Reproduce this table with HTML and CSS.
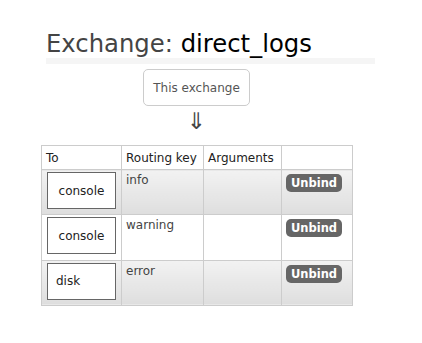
FILE: index.html
```html
<!DOCTYPE html>
<html>
<head>
<meta charset="utf-8">
<link rel="stylesheet" href="styles.css">
</head>
<body>
<div class="page">
  <h1 class="title"><span class="label">Exchange:</span> <span class="name">direct_logs</span></h1>
  <div class="band"></div>
  <div class="flow">
    <div class="source">This exchange</div>
    <div class="arrow">&#8659;</div>
  </div>
  <table class="bindings">
    <colgroup>
      <col class="c1"><col class="c2"><col class="c3"><col class="c4">
    </colgroup>
    <thead>
      <tr><th>To</th><th>Routing key</th><th>Arguments</th><th></th></tr>
    </thead>
    <tbody>
      <tr class="alt">
        <td><div class="dest">console</div></td>
        <td>info</td>
        <td></td>
        <td><button class="unbind">Unbind</button></td>
      </tr>
      <tr>
        <td><div class="dest">console</div></td>
        <td>warning</td>
        <td></td>
        <td><button class="unbind">Unbind</button></td>
      </tr>
      <tr class="alt">
        <td><div class="dest dest-left">disk</div></td>
        <td>error</td>
        <td></td>
        <td><button class="unbind">Unbind</button></td>
      </tr>
    </tbody>
  </table>
</div>
</body>
</html>
```
FILE: styles.css
```css
html, body {
  margin: 0;
  padding: 0;
  background: #fff;
}
body {
  font-family: "DejaVu Sans", Verdana, sans-serif;
  font-size: 12px;
  color: #444;
}
.page {
  padding: 29px 0 0 41px;
}
.title {
  margin: 0 0 0 5px;
  font-weight: normal;
  font-size: 24.3px;
  line-height: 29px;
}
.title .label { color: #444; }
.title .name { color: #000; }
.band {
  margin: 0 0 0 5px;
  width: 329px;
  height: 6px;
  background: #f5f5f5;
}
.flow {
  width: 311px;
  display: flex;
  flex-direction: column;
  align-items: center;
  padding-top: 5px;
}
.source {
  box-sizing: border-box;
  width: 107px;
  height: 37px;
  border: 1px solid #ccc;
  border-radius: 5px;
  display: flex;
  align-items: center;
  justify-content: center;
  color: #555;
}
.arrow {
  font-size: 23px;
  line-height: 24px;
  height: 24px;
  color: #444;
  margin-top: 3px;
  margin-bottom: 12px;
}
.bindings {
  border-collapse: collapse;
  table-layout: fixed;
  width: 311px;
}
.c1 { width: 80px; }
.c2 { width: 82px; }
.c3 { width: 78px; }
.c4 { width: 71px; }
.bindings th, .bindings td {
  border: 1px solid #ccc;
  text-align: left;
  vertical-align: top;
  padding: 3px 4px;
  font-weight: normal;
  color: #444;
}
.bindings th {
  color: #222;
  height: 17px;
  padding: 5px 4px 1px 4px;
}
.bindings tbody td { height: 38.4px; }
.bindings tr.alt td {
  background: linear-gradient(#f2f2f2, #dedede);
}
.bindings td:first-child { padding: 2px 4px 2px 5px; }
.dest {
  box-sizing: border-box;
  width: 69px;
  height: 37px;
  border: 1px solid #666;
  background: #fff;
  display: flex;
  align-items: center;
  justify-content: center;
  color: #222;
}
.dest-left {
  justify-content: flex-start;
  padding-left: 8px;
}
.unbind {
  margin-top: 1px;
  width: 56px;
  height: 18px;
  border: none;
  border-radius: 5px;
  background: #666;
  color: #fff;
  font-family: "DejaVu Sans", Verdana, sans-serif;
  font-weight: bold;
  font-size: 11.5px;
  padding: 0;
  line-height: 18px;
}
```
